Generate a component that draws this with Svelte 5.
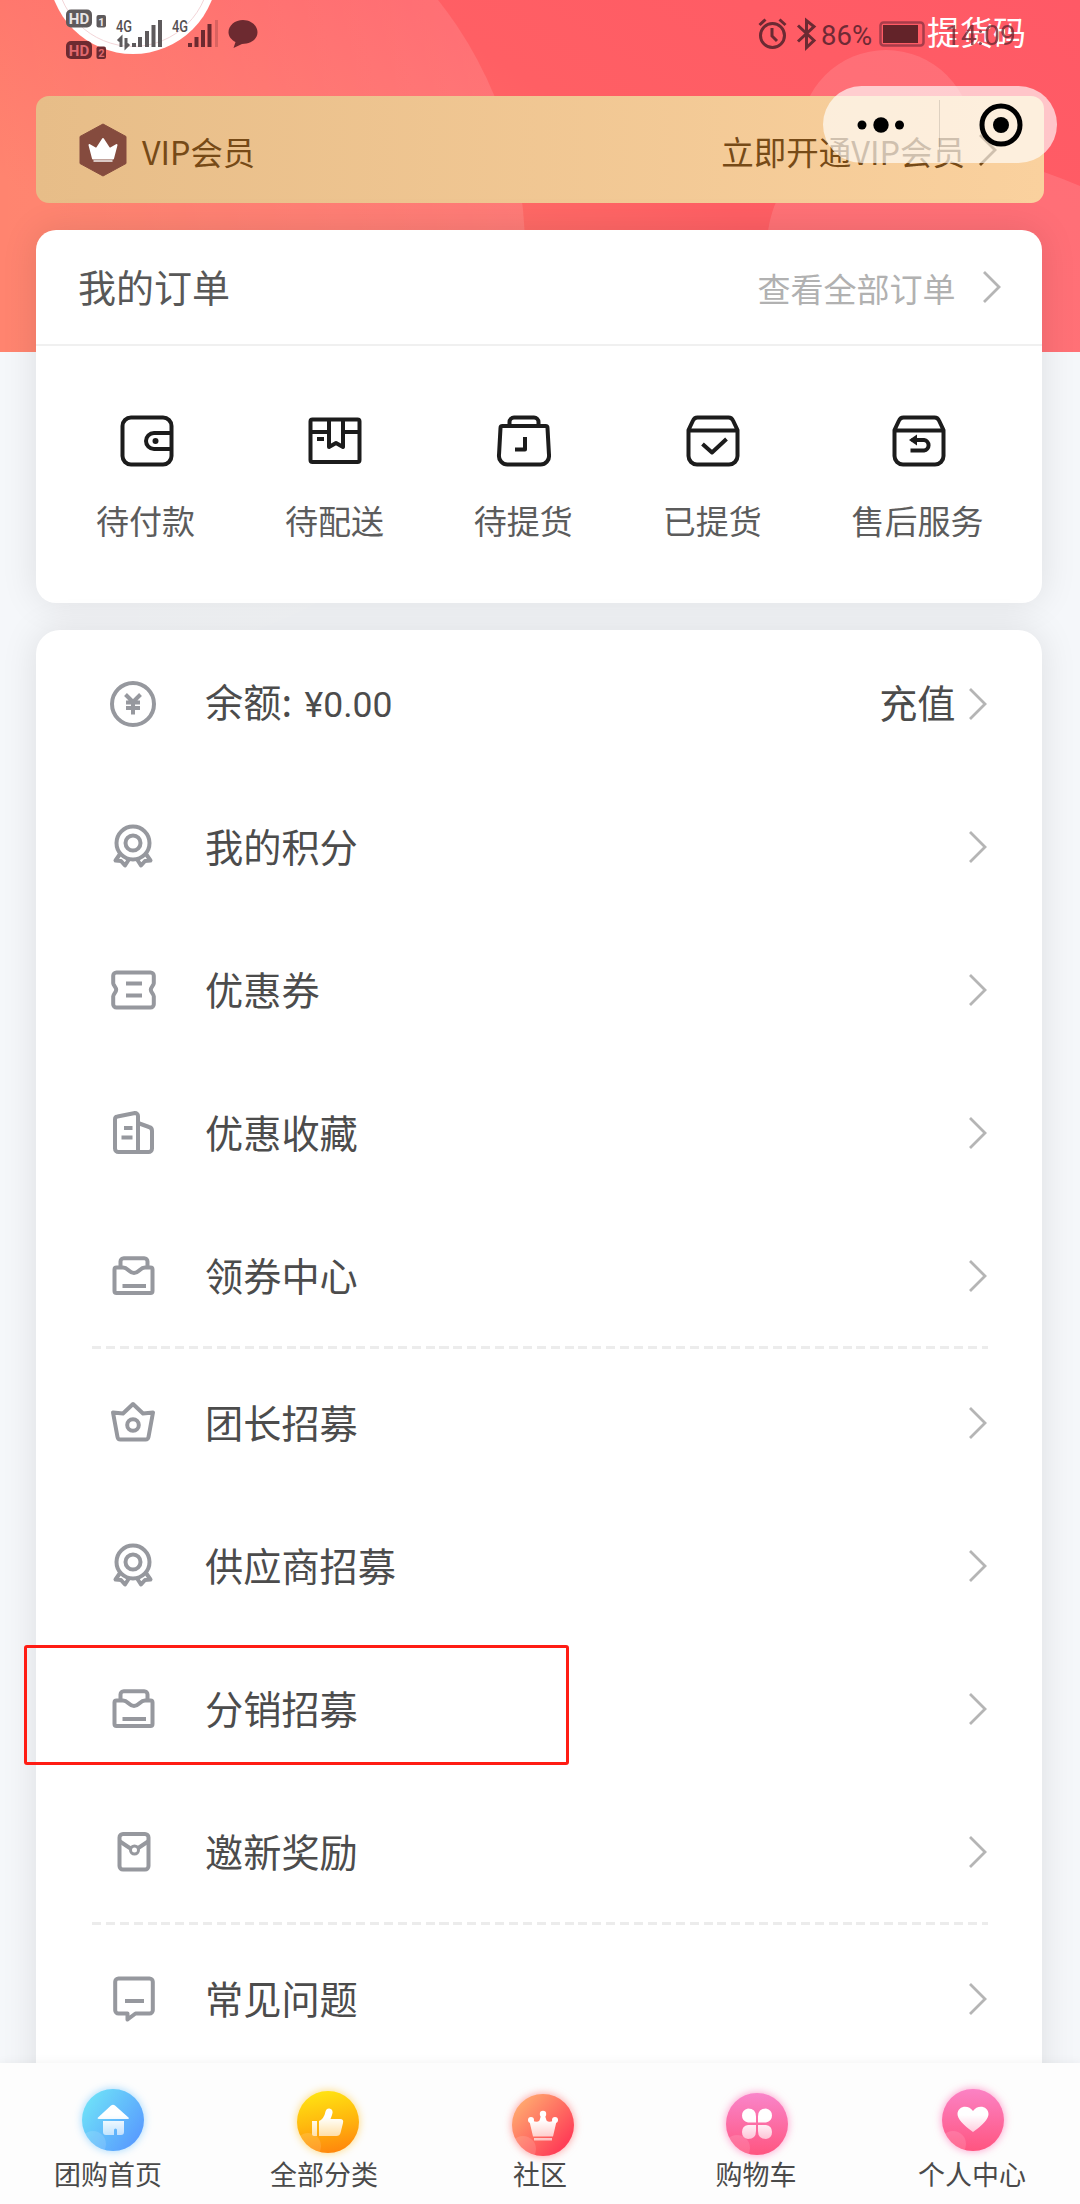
<script>
  const orders = [
    { label: '待付款', icon: 'wallet' },
    { label: '待配送', icon: 'parcel' },
    { label: '待提货', icon: 'pickup' },
    { label: '已提货', icon: 'done' },
    { label: '售后服务', icon: 'refund' },
  ];
  const groups = [
    [
      { label: '余额: ', amount: '¥0.00', icon: 'yen', action: '充值' },
      { label: '我的积分', icon: 'medal' },
      { label: '优惠券', icon: 'coupon' },
      { label: '优惠收藏', icon: 'building' },
      { label: '领券中心', icon: 'inbox' },
    ],
    [
      { label: '团长招募', icon: 'crown' },
      { label: '供应商招募', icon: 'medal' },
      { label: '分销招募', icon: 'inbox', marked: true },
      { label: '邀新奖励', icon: 'envelope' },
    ],
    [{ label: '常见问题', icon: 'chat' }],
  ];
  const tabs = [
    { label: '团购首页', icon: 'home' },
    { label: '全部分类', icon: 'thumb' },
    { label: '社区', icon: 'king' },
    { label: '购物车', icon: 'clover' },
    { label: '个人中心', icon: 'heart' },
  ];
</script>

{#snippet chevron()}
  <svg class="chevron" width="20" height="34" viewBox="0 0 20 34"><path d="M2 2 17 17 2 32" /></svg>
{/snippet}

<div class="page">
  <svg class="backdrop" width="1080" height="352" viewBox="0 0 1080 352">
    <defs>
      <linearGradient id="red" x1="0" y1="0.5" x2="1" y2="0">
        <stop offset="0" stop-color="#ff7f69" />
        <stop offset="0.5" stop-color="#ff5f64" />
        <stop offset="1" stop-color="#ff5966" />
      </linearGradient>
      <linearGradient id="veil" x1="0" y1="0" x2="1" y2="0">
        <stop offset="0" stop-color="#fff" stop-opacity="0" />
        <stop offset="1" stop-color="#fff" stop-opacity="0.12" />
      </linearGradient>
    </defs>
    <rect width="1080" height="352" fill="url(#red)" />
    <circle cx="122" cy="250" r="403" fill="url(#veil)" />
    <path d="M800 136a86 86 0 0 1 172 0z" fill="#fff" opacity="0.12" />
    <path d="M767 352V240C776 130 900 112 1080 186V352Z" fill="#fff" opacity="0.12" />
    <circle cx="133" cy="-30.500" r="84.500" fill="#fff" />
    <circle cx="133" cy="-30.500" r="77" fill="none" stroke="#f3d5d8" />
  </svg>

  <div class="status">
    <svg width="200" height="54" viewBox="62 6 200 54" class="signals">
      <g class="ink">
        <rect x="66" y="9.500" width="26" height="18" rx="5" />
        <rect x="96.500" y="15" width="9.500" height="12.500" rx="2" />
        <rect x="66" y="41" width="26" height="18" rx="5" class="maroon" />
        <rect x="96.500" y="46.500" width="9.500" height="12.500" rx="2" class="maroon" />
        <path d="M132 43h4v4h-4zM138 37h4v10h-4zM145 31h4v16h-4zM151.500 25h4v22h-4zM158 20h4v27h-4z" />
        <path class="maroon" d="M188 43h4v4h-4zM194.500 37h4v10h-4zM201 30h4v17h-4zM207.500 24h4v23h-4z" />
        <path class="maroon faint" d="M215 20h3v27h-3z" />
        <path class="maroon" d="M243 20c8 0 14.500 5.500 14.500 12.300S251 44 242 44l-8.500 4 2-6c-4-2-7-5.500-7-9.700C228.500 25.500 235 20 243 20z" />
      </g>
      <path d="M121 47V38l-3 3M126 38v9l3-3" class="arrows" />
      <text x="79" y="24" class="hd pale">HD</text>
      <text x="101.300" y="25.500" class="num pale">1</text>
      <text x="79" y="55.500" class="hd rosy">HD</text>
      <text x="101.300" y="57" class="num rosy">2</text>
      <text x="116" y="32" class="net" textLength="16" lengthAdjust="spacingAndGlyphs">4G</text>
      <text x="172" y="32" class="net" textLength="16" lengthAdjust="spacingAndGlyphs">4G</text>
    </svg>
    <div class="phone">
      <svg width="58" height="32" viewBox="758 17 58 32" class="lines">
        <circle cx="772.500" cy="34.500" r="12" />
        <path d="M772 27v8l5 5M759.500 24l6-5.500M785.500 24l-6-5.500M798 24.500l16 15-7.500 7V19.500l7.500 6-16 15" />
      </svg>
      <span class="percent">86%</span>
      <svg width="46" height="26" viewBox="0 0 46 26">
        <rect x="1.500" y="1.500" width="43" height="23" rx="3" fill="none" stroke="#a83c4a" stroke-width="2.500" />
        <rect x="4" y="4" width="35" height="18" fill="#632329" />
      </svg>
      <span class="code">提货码</span>
      <span class="time">14:09</span>
    </div>
  </div>

  <div class="vip">
    <svg width="48" height="54" viewBox="0 0 48 54">
      <path d="M24 1 47 13.500v27L24 53 1 40.500v-27z" fill="#854b3e" stroke="#854b3e" stroke-linejoin="round" />
      <path d="M10.500 22l7 4L24 16l6.500 10 7-4-3.500 13.500H14z" fill="#fff" stroke="#fff" stroke-width="2" stroke-linejoin="round" />
      <path d="M14.500 38h19" stroke="#fff" stroke-width="2" opacity="0.700" />
    </svg>
    <span class="vip-name">VIP会员</span>
    <span class="vip-open">立即开通VIP会员</span>
    {@render chevron()}
  </div>

  <div class="capsule">
    <svg width="40" height="20" viewBox="0 0 40 20"><circle cx="2" cy="10" r="4.500" /><circle cx="21" cy="10" r="7.700" /><circle cx="39.500" cy="10" r="4.500" /></svg>
    <i></i>
    <svg width="46" height="46" viewBox="0 0 46 46"><circle cx="23" cy="23" r="19" fill="none" stroke="#000" stroke-width="5" /><circle cx="23" cy="23" r="8" /></svg>
  </div>

  <section class="card orders">
    <header>
      <h2>我的订单</h2>
      <span>查看全部订单</span>
      {@render chevron()}
    </header>
    <div class="order-items">
      {#each orders as o}
        <div class="order">
          <svg width="56" height="54" viewBox="-1.500 0 56 54" class="dark">
            {#if o.icon === 'wallet'}
              <rect x="3" y="3.500" width="49" height="47" rx="8.500" />
              <path d="M52 19H34.500a8 8 0 0 0 0 16H52" />
              <circle cx="36" cy="27" r="3" class="dot" />
            {:else if o.icon === 'parcel'}
              <rect x="3" y="5.500" width="49" height="42.500" rx="2" />
              <path d="M3 18h18M36 18h16M21.500 6v27l7-4 7 4V6M9.500 25h7" />
            {:else if o.icon === 'pickup'}
              <path d="M6 12h43a2 2 0 0 1 2 2l1.500 27a8.500 8.500 0 0 1-8.500 9.500H11A8.500 8.500 0 0 1 2.500 41L4 14a2 2 0 0 1 2-2zM13 11V8a4.500 4.500 0 0 1 4.500-4.500h20A4.500 4.500 0 0 1 42 8v3M28.500 23v12.500H18.500" />
            {:else}
              <path d="M3 16 7.500 6.500A5 5 0 0 1 12 3.500h31a5 5 0 0 1 4.500 3L52 16v26a8.500 8.500 0 0 1-8.500 8.500h-32A8.500 8.500 0 0 1 3 42zM3 16.500h49" />
              {#if o.icon === 'done'}
                <path d="M17 30 26.500 38.500 41 25" />
              {:else}
                <path d="M19 36.500h13.500a5.300 5.300 0 0 0 0-10.500H20" />
                <path d="M17.500 26l8-5.500v11z" class="dot" />
              {/if}
            {/if}
          </svg>
          <span>{o.label}</span>
        </div>
      {/each}
    </div>
  </section>

  <section class="card menu">
    {#each groups as group}
      <div class="group">
        {#each group as row}
          <div class="row">
            {#if row.marked}<b class="marker"></b>{/if}
            <svg width="48" height="48" viewBox="0 0 48 48" class="gray">
              {#if row.icon === 'yen'}
                <circle cx="24" cy="24" r="21" />
                <path d="M16.500 14.500 24 22l7.500-7.500M24 22v12.500M17 22.500h14M17 28h14" />
              {:else if row.icon === 'medal'}
                <circle cx="24" cy="20" r="16.500" />
                <circle cx="24" cy="20" r="7.500" />
                <path d="M11 31 6.500 37.500l5.500.5 4 4.500 4.500-7M37 31l4.500 6.500-5.500.5-4 4.500-4.500-7" />
              {:else if row.icon === 'coupon'}
                <path d="M7.500 6.500h34a3.300 3.300 0 0 1 3.300 3.300v7.500c0 2-3 4-3 6.500s3 4.500 3 6.500v8a3.300 3.300 0 0 1-3.300 3.300h-34a3.300 3.300 0 0 1-3.300-3.300v-8c0-2 3-4 3-6.500s-3-4.500-3-6.500V9.800a3.300 3.300 0 0 1 3.300-3.300zM17 17.500h16M17 29.500h16" />
              {:else if row.icon === 'building'}
                <path d="M8.500 7.500 26 4a3 3 0 0 1 3 3v36H9.500a3.500 3.500 0 0 1-3.500-3.500v-29a3 3 0 0 1 2.500-3zM29 14l11 4a4 4 0 0 1 3 4v17.500a3.500 3.500 0 0 1-3.500 3.500H29M15 19h8.500M12.500 28.500h11" />
              {:else if row.icon === 'inbox'}
                <path d="M11.500 15V9.500A3.300 3.300 0 0 1 14.800 6.200h20.400a3.300 3.300 0 0 1 3.300 3.300V15M7.500 15.500H14c5 0 6 5.500 11 5.500s6-5.500 11-5.500h5.500a2 2 0 0 1 2 2v21.500a2 2 0 0 1-2 2h-34a2 2 0 0 1-2-2V17.500a2 2 0 0 1 2-2zM13.500 34h23.500" />
              {:else if row.icon === 'crown'}
                <path d="M4 13.500 14 14.500 24 5l10 9.500 10-1-4.500 24.500a3 3 0 0 1-3 2.500h-25a3 3 0 0 1-3-2.500z" />
                <circle cx="24" cy="26" r="5.800" />
              {:else if row.icon === 'envelope'}
                <rect x="10.500" y="6" width="29" height="35.500" rx="3.500" />
                <path d="M11 13.500l10.500 7M39 13.500l-10.500 7" />
                <circle cx="25.500" cy="22" r="4" class="thin" />
              {:else}
                <path d="M9.500 3.500h31a3.300 3.300 0 0 1 3.300 3.300v28.400a3.300 3.300 0 0 1-3.300 3.300H26.500L18.500 44.500V38.500H9.500a3.300 3.300 0 0 1-3.300-3.300V6.800a3.300 3.300 0 0 1 3.300-3.300zM16 26h19" />
              {/if}
            </svg>
            <span class="label">{row.label}{#if row.amount}<span class="amount">{row.amount}</span>{/if}</span>
            {#if row.action}<span class="action">{row.action}</span>{/if}
            {@render chevron()}
          </div>
        {/each}
      </div>
    {/each}
  </section>

  <nav>
    <svg class="defs" width="0" height="0">
      <defs>
        <linearGradient id="home" x1="0" y1="0.200" x2="1" y2="0.900"><stop offset="0" stop-color="#6fe3f8" /><stop offset="1" stop-color="#5694ff" /></linearGradient>
        <linearGradient id="thumb" x1="0.400" y1="0" x2="0.600" y2="1"><stop offset="0" stop-color="#ffe312" /><stop offset="0.500" stop-color="#ffb80e" /><stop offset="1" stop-color="#ff860c" /></linearGradient>
        <linearGradient id="king" x1="0.100" y1="0.200" x2="0.800" y2="0.850"><stop offset="0" stop-color="#ffa56e" /><stop offset="1" stop-color="#ff3f57" /></linearGradient>
        <linearGradient id="clover" x1="0.500" y1="0" x2="0.500" y2="1"><stop offset="0" stop-color="#f985ca" /><stop offset="1" stop-color="#ff5580" /></linearGradient>
        <linearGradient id="heart" x1="0.500" y1="0" x2="0.500" y2="1"><stop offset="0" stop-color="#fb82c4" /><stop offset="1" stop-color="#ff5580" /></linearGradient>
        <linearGradient id="shine" gradientUnits="userSpaceOnUse" x1="0" y1="24" x2="0" y2="54"><stop offset="0.300" stop-color="#fff" /><stop offset="1" stop-color="#fff" stop-opacity="0.600" /></linearGradient>
        <clipPath id="disc"><circle cx="38" cy="38" r="31" /></clipPath>
      </defs>
    </svg>
    {#each tabs as t}
      <div class="tab">
        <svg width="76" height="76" viewBox="0 0 76 76" class={t.icon}>
          <circle cx="38" cy="38" r="31" fill="url(#{t.icon})" />
          <circle cx="18" cy="62" r="13" fill="#fff" opacity="0.130" clip-path="url(#disc)" />
          <g fill="url(#shine)">
            {#if t.icon === 'home'}
              <path d="M36 23.500q2-1.500 4 0L54 36q0 1-1.500 1H24q-1.500 0-1.500-1zM28 39h21v11q0 3-3 3h-4v-5q0-1.500-1.500-1.500T39 48v5h-8q-3 0-3-3z" />
            {:else if t.icon === 'thumb'}
              <path d="M22 37h5v15h-3q-2 0-2-2zM29 37q5-2 6.500-9.500 1-3.500 4-3 4.500 1 2.500 6.500l-1.500 4H50q4 0 3 4l-2.500 10q-.8 3-4 3H29z" />
            {:else if t.icon === 'king'}
              <circle cx="26" cy="33" r="3" /><circle cx="38" cy="27" r="3.200" /><circle cx="50" cy="33" r="3" />
              <path d="M28 49.500 24.500 34.500l3-1Q32 36 34.500 33.500L36.500 27h3l2 6.500Q44 36 48.500 33.500l3 1L48 49.500zM29 51h18v2.500H29z" />
            {:else if t.icon === 'clover'}
              <path d="M37 36.500h-8q-6-1.500-6-7t6-7q8 0 8 8zM39 36.500h8q6-1.500 6-7t-6-7q-8 0-8 8zM37 39h-8q-6 1-6 7t6 7q8 0 8-8zM39 39h8q6 1 6 7t-6 7q-8 0-8-8z" />
            {:else}
              <path d="M38 50Q22.500 39 22.500 32c0-8 11-10 15.500-3 4.500-7 15.500-5 15.500 3Q53.500 39 38 50z" />
            {/if}
          </g>
        </svg>
        <span>{t.label}</span>
      </div>
    {/each}
  </nav>
</div>

<style>
  :global(body) {
    background: #f5f7fa;
  }
  .page {
    position: relative;
    box-sizing: border-box;
    width: 1080px;
    height: 2204px;
    overflow: hidden;
    display: flex;
    flex-direction: column;
    background: #f5f7fa;
    font-family: 'Noto Sans CJK SC', sans-serif;
    color: #505050;
  }
  svg {
    display: block;
    flex: none;
    overflow: visible;
  }
  .backdrop {
    position: absolute;
    top: 0;
    left: 0;
  }
  .status {
    position: relative;
    flex: none;
    display: flex;
    justify-content: space-between;
    height: 96px;
    box-sizing: border-box;
    padding: 6px 54px 0 62px;
  }
  .ink {
    fill: #5e5a5c;
  }
  .maroon {
    fill: #6d2a30;
  }
  .faint {
    opacity: 0.25;
  }
  .arrows {
    fill: none;
    stroke: #5e5a5c;
    stroke-width: 3;
  }
  .hd,
  .num {
    font: 700 15px Roboto, sans-serif;
    text-anchor: middle;
  }
  .num {
    font-size: 11px;
  }
  .pale {
    fill: #e8e5e6;
  }
  .rosy {
    fill: #e0696e;
  }
  .net {
    font: 500 16.500px Roboto, sans-serif;
    fill: #554f51;
  }
  .phone {
    position: relative;
    display: flex;
    align-items: center;
    height: 56px;
    width: 268px;
  }
  .lines {
    fill: none;
    stroke: #6b2a33;
    stroke-width: 3;
  }
  .percent {
    width: 63px;
    font: 27.500px Roboto, sans-serif;
    color: #6f2a35;
    margin-left: 5px;
    margin-top: 3px;
  }
  .code {
    font-size: 33px;
    line-height: 40px;
    color: #fff;
    margin-top: -7px;
    margin-left: 2px;
    white-space: nowrap;
  }
  .time {
    position: absolute;
    right: 10px;
    top: 14px;
    font: 28.500px/32px Roboto, sans-serif;
    color: #6b2a33;
    opacity: 0.8;
  }
  .vip {
    position: relative;
    flex: none;
    display: flex;
    align-items: center;
    box-sizing: border-box;
    width: 1008px;
    height: 107px;
    margin-left: 36px;
    padding: 0 46px 0 43px;
    border-radius: 13px;
    background: linear-gradient(90deg, #e7bd88, #fad19e);
    color: #764a17;
    font-size: 32.300px;
  }
  .vip-name {
    margin-left: 15px;
    margin-top: 2px;
  }
  .vip-open {
    margin-left: auto;
    margin-top: 2px;
    margin-right: 13px;
    font-size: 32.500px;
  }
  .vip .chevron {
    stroke: #764a17;
  }
  .capsule {
    position: absolute;
    left: 823px;
    top: 86px;
    width: 234px;
    height: 77px;
    box-sizing: border-box;
    padding: 0 33px 0 37px;
    border-radius: 39px;
    background: rgba(255, 255, 255, 0.65);
    display: flex;
    align-items: center;
    justify-content: space-between;
  }
  .capsule i {
    width: 1px;
    height: 50px;
    background: rgba(0, 0, 0, 0.12);
  }
  .card {
    position: relative;
    flex: none;
    width: 1005.500px;
    margin-left: 36px;
    background: #fff;
    border-radius: 20px;
    box-shadow: 0 0 36px rgba(0, 0, 0, 0.1);
  }
  .orders {
    margin-top: 27px;
    height: 373px;
  }
  .orders header {
    display: flex;
    align-items: center;
    height: 114px;
    border-bottom: 2px solid #f0f0f0;
    padding: 0 40px 0 42px;
    color: #b1b1b1;
    font-size: 33px;
  }
  .orders h2 {
    margin: -3px auto 0 0;
    font-size: 38px;
    font-weight: 400;
    color: #585858;
  }
  .orders header span {
    margin-right: 26px;
    margin-top: 2px;
  }
  .chevron {
    fill: none;
    stroke: #b5b5b5;
    stroke-width: 2.800;
  }
  .order-items {
    display: flex;
    justify-content: space-between;
    padding: 68px 58px 0 60px;
  }
  .order {
    display: flex;
    flex-direction: column;
    align-items: center;
    gap: 28px;
    font-size: 33px;
    line-height: 48px;
    color: #5c5c5c;
  }
  .dark {
    fill: none;
    stroke: #1c1c1c;
    stroke-width: 4;
    stroke-linejoin: round;
  }
  .dark .dot {
    fill: #1c1c1c;
    stroke: none;
  }
  .menu {
    margin-top: 27px;
    height: 1600px;
    padding-top: 2px;
    border-radius: 24px;
  }
  .group + .group::before {
    content: '';
    display: block;
    height: 3px;
    margin: -1px 54px 2px 56px;
    background: repeating-linear-gradient(90deg, #ececec 0 9px, transparent 9px 13.900px);
  }
  .row {
    position: relative;
    display: flex;
    align-items: center;
    height: 143px;
    box-sizing: border-box;
    padding: 0 54px 0 73px;
    font-size: 38.200px;
    line-height: 56px;
    color: #4c4c4c;
  }
  .gray {
    fill: none;
    stroke: #96989e;
    stroke-width: 4;
    stroke-linejoin: round;
  }
  .gray .thin {
    stroke-width: 3;
  }
  .label {
    margin-left: 48px;
    margin-right: auto;
    margin-top: -2px;
    white-space: pre;
  }
  .amount {
    margin-left: 4px;
    font-family: Roboto, sans-serif;
    font-size: 35.500px;
  }
  .action {
    margin-right: 12px;
    margin-top: -3px;
  }
  .marker {
    position: absolute;
    left: -12px;
    top: 8px;
    width: 545px;
    height: 120px;
    box-sizing: border-box;
    border: 3px solid #ff1c14;
    border-radius: 3px;
  }
  nav {
    position: absolute;
    left: 0;
    bottom: 0;
    width: 1080px;
    height: 141px;
    display: flex;
    background: #fdfdfd;
    box-shadow: 0 0 10px rgba(0, 0, 0, 0.06);
  }
  .defs {
    position: absolute;
  }
  .tab {
    flex: 1;
    display: flex;
    flex-direction: column;
    align-items: center;
    padding-top: 19px;
    font-size: 27px;
    line-height: 40px;
    color: #4a4a4a;
  }
  .tab span {
    margin-top: -4px;
  }
  .tab svg {
    position: relative;
  }
  .home {
    left: 4.500px;
    filter: drop-shadow(0 0 4px rgba(120, 200, 255, 0.7));
  }
  .thumb {
    left: 4px;
    top: 2px;
    filter: drop-shadow(0 0 4px rgba(255, 200, 60, 0.7));
  }
  .king {
    left: 2.500px;
    top: 5px;
    filter: drop-shadow(0 0 4px rgba(255, 110, 110, 0.7));
  }
  .clover {
    left: 1px;
    top: 4px;
    filter: drop-shadow(0 0 4px rgba(255, 110, 180, 0.7));
  }
  .heart {
    left: 1px;
    filter: drop-shadow(0 0 4px rgba(255, 110, 180, 0.7));
  }
</style>
